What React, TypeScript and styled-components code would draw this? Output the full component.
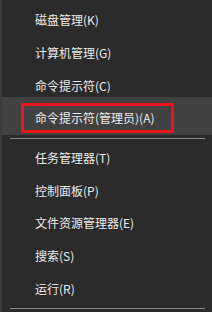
import React from "react";
import styled, { createGlobalStyle } from "styled-components";

const Global = createGlobalStyle`
  html, body { margin: 0; padding: 0; background: #2b2b2b; }
  #root { width: 212px; height: 312px; }
`;

const Menu = styled.div`
  width: 212px;
  height: 312px;
  box-sizing: border-box;
  background: #2b2b2b;
  border-left: 2px solid #3a3a3a;
  padding-top: 4px;
  display: flex;
  flex-direction: column;
  font-family: "Noto Sans CJK SC", "Noto Sans", sans-serif;
  font-size: 12px;
  color: #ececec;
  overflow: hidden;
`;

const Item = styled.div<{ $h: number; $shift?: number; $active?: boolean }>`
  position: relative;
  height: ${(p) => p.$h}px;
  box-sizing: border-box;
  padding-left: 33px;
  padding-top: ${(p) => (p.$shift ?? 0) * 2}px;
  display: flex;
  align-items: center;
  background: ${(p) => (p.$active ? "#414141" : "transparent")};
  white-space: nowrap;
  line-height: 1;
`;

const Highlight = styled.div`
  position: absolute;
  left: 19px;
  top: 6px;
  width: 153px;
  height: 30px;
  box-sizing: border-box;
  border: 3px solid #e8151b;
`;

const Separator = styled.div`
  height: 7px;
  display: flex;
  align-items: center;
  padding: 0 7px 0 8px;
  &::after {
    content: "";
    flex: 1;
    height: 1px;
    background: #8a8a8a;
  }
`;

const top = [
  { label: "磁盘管理(K)", h: 33 },
  { label: "计算机管理(G)", h: 33 },
  { label: "命令提示符(C)", h: 28, shift: 2.5 },
];

const bottom = ["任务管理器(T)", "控制面板(P)", "文件资源管理器(E)", "搜索(S)", "运行(R)"];

export default function App() {
  return (
    <>
      <Global />
      <Menu>
        {top.map((it) => (
          <Item key={it.label} $h={it.h} $shift={it.shift}>
            {it.label}
          </Item>
        ))}
        <Item $h={38} $shift={2} $active>
          <Highlight />
          命令提示符(管理员)(A)
        </Item>
        <Separator />
        {bottom.map((l) => (
          <Item key={l} $h={33}>
            {l}
          </Item>
        ))}
        <Separator />
      </Menu>
    </>
  );
}
